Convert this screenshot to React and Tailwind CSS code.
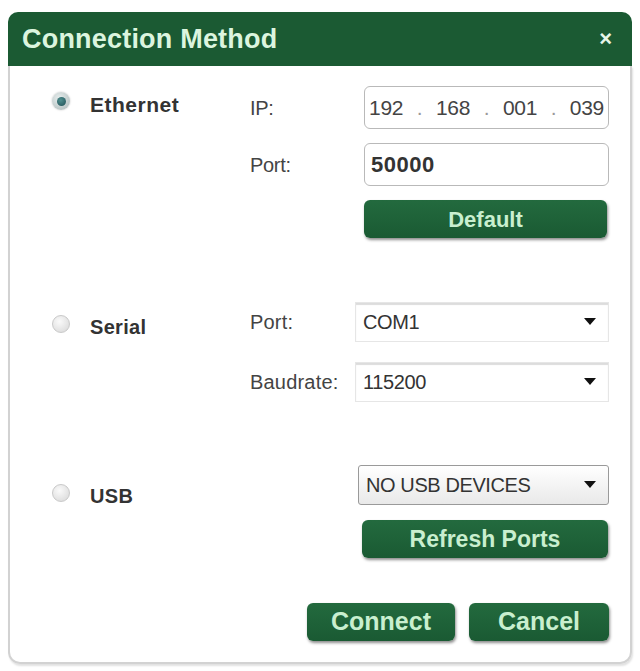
import React from 'react';

const font = { fontFamily: '"Liberation Sans", Arial, sans-serif' };

function Radio({ checked }) {
  return checked ? (
    <span className="w-[18px] h-[18px] rounded-full bg-[radial-gradient(circle_at_40%_35%,#e8eeee,#a9b7b7)] flex items-center justify-center shadow-[0_0_2px_rgba(0,0,0,0.25)]">
      <span className="w-[9px] h-[9px] rounded-full bg-[radial-gradient(circle_at_40%_35%,#4f8f8f,#1f4f55)]" />
    </span>
  ) : (
    <span className="w-[18px] h-[18px] rounded-full border border-[#c9c9c9] bg-[radial-gradient(circle_at_40%_35%,#fafafa,#d6d6d6)]" />
  );
}

function GreenButton({ children, className = '' }) {
  return (
    <button className={`h-[38px] rounded-[6px] bg-[linear-gradient(#236a3e,#1a5a33)] text-[#c9efcf] font-bold shadow-[1px_2px_3px_rgba(0,0,0,0.45)] ${className}`}>
      {children}
    </button>
  );
}

function Caret() {
  return (
    <svg width="12" height="8" viewBox="0 0 12 8">
      <path d="M0 0 L12 0 L6 7 Z" fill="#111" />
    </svg>
  );
}

function Select({ value, boxed }) {
  return (
    <div
      className={`h-[40px] flex items-center justify-between pl-[7px] pr-[12px] text-[20px] text-[#333] tracking-[-0.4px] ${
        boxed
          ? 'border border-[#9a9a9a] rounded-[3px] bg-[linear-gradient(#ffffff,#e9e9e9)] w-[251px]'
          : 'border border-[#e6e6e6] bg-white shadow-[inset_0_2px_1px_#dcdcdc] w-[254px]'
      }`}
    >
      <span>{value}</span>
      <Caret />
    </div>
  );
}

export default function App() {
  return (
    <div className="w-[640px] h-[671px] bg-white pt-[12px] pl-[8px]" style={font}>
      <div className="w-[624px] h-[652px] flex flex-col">
        {/* Title bar */}
        <div className="h-[54px] bg-[#1b5a33] rounded-t-[10px] flex items-center justify-between pl-[14px] pr-[20px]">
          <span className="text-[27px] font-bold text-[#dcf5df] tracking-[0.2px]">Connection Method</span>
          <span className="text-[22px] font-bold text-[#e6f5e8] leading-none">×</span>
        </div>

        {/* Body */}
        <div className="flex-1 border-2 border-t-0 border-[#d2d2d2] rounded-b-[12px] pl-[42px] pr-[21px] pt-[20px] shadow-[1px_2px_2px_rgba(0,0,0,0.12)]">
          {/* Ethernet */}
          <div className="flex">
            <div className="w-[198px] flex items-start pt-[6px]">
              <Radio checked />
              <span className="ml-[20px] -mt-[3px] text-[21px] font-bold text-[#333] tracking-[0.5px]">Ethernet</span>
            </div>
            <div className="w-[114px] text-[20px] text-[#444] tracking-[-0.3px]">
              <div className="h-[43px] flex items-center">IP:</div>
              <div className="h-[43px] mt-[14px] flex items-center">Port:</div>
            </div>
            <div className="w-[245px]">
              <div className="h-[43px] border border-[#b9b9b9] rounded-[6px] flex items-center justify-between px-[4px] text-[21px] text-[#444] tracking-[-0.3px]">
                <span>192</span>
                <span className="text-[#999]">.</span>
                <span>168</span>
                <span className="text-[#999]">.</span>
                <span>001</span>
                <span className="text-[#999]">.</span>
                <span>039</span>
              </div>
              <div className="h-[43px] mt-[14px] border border-[#b9b9b9] rounded-[6px] flex items-center px-[6px] text-[22px] font-bold text-[#333] tracking-[0.5px]">
                50000
              </div>
              <GreenButton className="w-[243px] mt-[14px] text-[22px]">Default</GreenButton>
            </div>
          </div>

          {/* Serial */}
          <div className="flex mt-[64px]">
            <div className="w-[198px] flex items-start pt-[13px]">
              <Radio />
              <span className="ml-[20px] -mt-[3px] text-[20px] font-bold text-[#333] tracking-[0.3px]">Serial</span>
            </div>
            <div className="w-[105px] text-[20px] text-[#444] tracking-[0.2px]">
              <div className="h-[40px] flex items-center">Port:</div>
              <div className="h-[40px] mt-[20px] flex items-center">Baudrate:</div>
            </div>
            <div>
              <Select value="COM1" />
              <div className="mt-[20px]">
                <Select value="115200" />
              </div>
            </div>
          </div>

          {/* USB */}
          <div className="flex mt-[63px]">
            <div className="w-[306px] flex items-start pt-[19px]">
              <Radio />
              <span className="ml-[20px] -mt-[3px] text-[20px] font-bold text-[#333] tracking-[0.3px]">USB</span>
            </div>
            <div>
              <Select value="NO USB DEVICES" boxed />
              <GreenButton className="w-[246px] mt-[15px] ml-[4px] text-[23px]">Refresh Ports</GreenButton>
            </div>
          </div>

          {/* Actions */}
          <div className="flex justify-end gap-[14px] mt-[45px]">
            <GreenButton className="w-[148px] text-[25px]">Connect</GreenButton>
            <GreenButton className="w-[140px] text-[25px]">Cancel</GreenButton>
          </div>
        </div>
      </div>
    </div>
  );
}
